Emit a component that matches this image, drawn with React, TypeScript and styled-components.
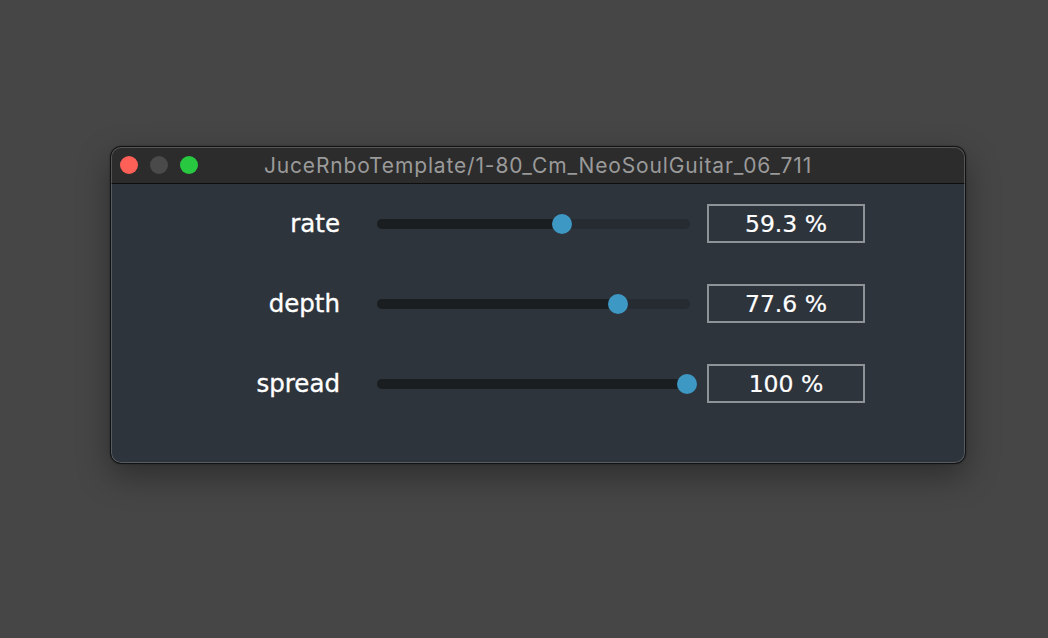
import React from "react";
import styled, { createGlobalStyle } from "styled-components";

const Global = createGlobalStyle`
  html, body { margin: 0; padding: 0; background: #464646; }
  body { width: 1048px; height: 638px; overflow: hidden; }
`;

const Page = styled.div`
  width: 1048px;
  height: 638px;
  box-sizing: border-box;
  padding: 146px 0 0 110px;
  background: #464646;
`;

const Window = styled.div`
  width: 856px;
  height: 318px;
  box-sizing: border-box;
  border: 1px solid #121212;
  border-radius: 11px;
  overflow: hidden;
  display: flex;
  flex-direction: column;
  background: #2e343c;
  box-shadow: 0 12px 32px rgba(0, 0, 0, 0.35), 0 0 2px rgba(0, 0, 0, 0.4);
  position: relative;
  &::after {
    content: "";
    position: absolute;
    inset: 0;
    border-radius: 10px;
    box-shadow: inset 0 0 0 1px rgba(255, 255, 255, 0.2);
    pointer-events: none;
  }
`;

const TitleBar = styled.div`
  height: 36px;
  flex: 0 0 36px;
  background: #2c2c2c;
  border-bottom: 1px solid #0e0e0e;
  display: flex;
  align-items: center;
  position: relative;
`;

const Lights = styled.div`
  display: flex;
  gap: 12px;
  padding-left: 9px;
  position: absolute;
  left: 0;
  top: 9px;
`;

const Light = styled.span<{ $c: string }>`
  width: 18px;
  height: 18px;
  border-radius: 50%;
  background: ${(p) => p.$c};
`;

const Title = styled.div`
  flex: 1;
  text-align: center;
  font-family: Inter, "Liberation Sans", sans-serif;
  font-size: 21px;
  letter-spacing: 0.85px;
  color: #9a9a9a;
  padding-top: 1px;
`;

const Body = styled.div`
  display: flex;
  flex-direction: column;
`;

const Row = styled.div`
  height: 80px;
  display: flex;
  align-items: center;
`;

const Label = styled.div`
  width: 229px;
  margin-right: 37px;
  text-align: right;
  font-family: "DejaVu Sans", Verdana, sans-serif;
  font-size: 24.5px;
  -webkit-text-stroke: 0.35px #ffffff;
  color: #ffffff;
  margin-top: -1px;
`;

const Track = styled.div`
  width: 313px;
  height: 10px;
  border-radius: 5px;
  background: #262b31;
  position: relative;
  margin-right: 17px;
`;

const Fill = styled.div`
  position: absolute;
  left: 0;
  top: 0;
  height: 10px;
  border-radius: 5px;
  background: #1a1e21;
`;

const Thumb = styled.div`
  position: absolute;
  top: 50%;
  width: 20px;
  height: 20px;
  margin: -10px 0 0 -10px;
  border-radius: 50%;
  background: #3d98c4;
`;

const ValueBox = styled.div`
  width: 158px;
  height: 39px;
  box-sizing: border-box;
  border: 2px solid #8e9398;
  display: flex;
  align-items: center;
  justify-content: center;
  font-family: "DejaVu Sans", Verdana, sans-serif;
  font-size: 23.5px;
  -webkit-text-stroke: 0.2px #ffffff;
  color: #ffffff;
  margin-top: -1px;
`;

const params = [
  { name: "rate", v: 0.593, text: "59.3 %" },
  { name: "depth", v: 0.776, text: "77.6 %" },
  { name: "spread", v: 1, text: "100 %" },
];

export default function App() {
  return (
    <Page>
      <Global />
      <Window>
        <TitleBar>
          <Lights>
            <Light $c="#fe5f57" />
            <Light $c="#4a4a4a" />
            <Light $c="#28c840" />
          </Lights>
          <Title>JuceRnboTemplate/1-80_Cm_NeoSoulGuitar_06_711</Title>
        </TitleBar>
        <Body>
          {params.map((p) => {
            const x = 3.5 + p.v * 306;
            return (
              <Row key={p.name}>
                <Label>{p.name}</Label>
                <Track>
                  <Fill style={{ width: x }} />
                  <Thumb style={{ left: x }} />
                </Track>
                <ValueBox>{p.text}</ValueBox>
              </Row>
            );
          })}
        </Body>
      </Window>
    </Page>
  );
}
